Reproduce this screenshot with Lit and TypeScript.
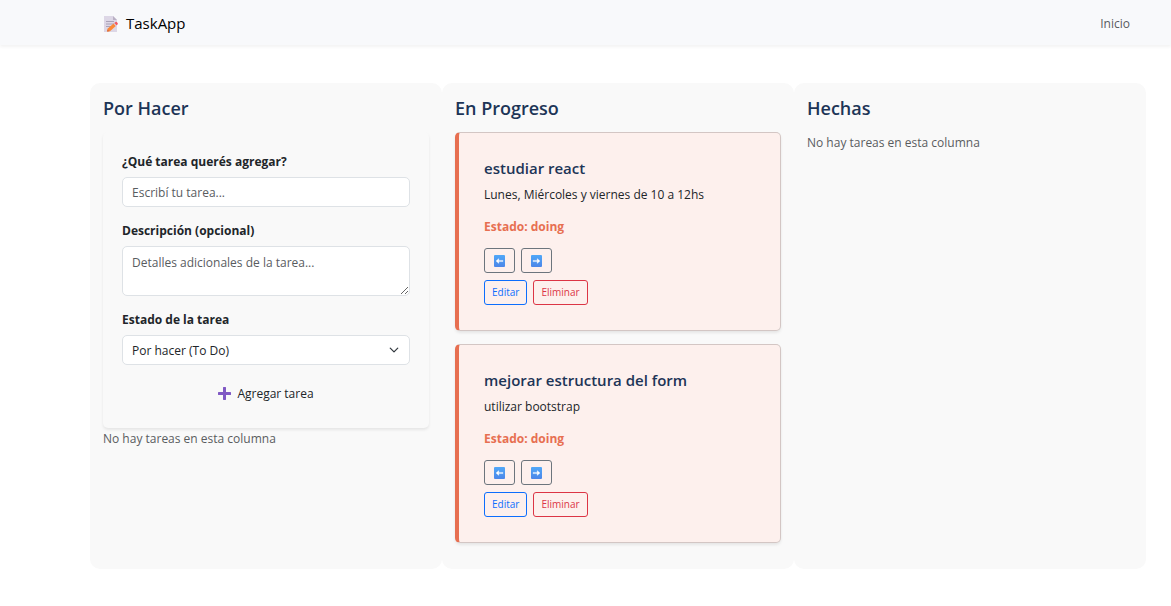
import { LitElement, html, css, svg, nothing } from "lit";
import { customElement, property, state } from "lit/decorators.js";

type Status = "todo" | "doing" | "done";

interface Task {
  id: number;
  title: string;
  description: string;
  status: Status;
}

const base = css`
  *,
  *::before,
  *::after {
    box-sizing: border-box;
  }
  h1, h2, h3, p {
    margin: 0;
  }
  button, input, textarea, select {
    font: inherit;
    margin: 0;
  }
  svg {
    display: block;
    flex: none;
  }
`;

const arrowIcon = (direction: "left" | "right") => svg`
  <svg width="11" height="12" viewBox="0 0 11 12" aria-hidden="true">
    <defs>
      <linearGradient id="tile" x1="0" y1="0" x2="0" y2="1">
        <stop offset="0" stop-color="#50a8f8" />
        <stop offset="1" stop-color="#4c86e8" />
      </linearGradient>
    </defs>
    <rect width="11" height="12" rx="1" fill="url(#tile)" />
    <path
      d=${direction === "left"
        ? "M2 6 4.8 3.6V5.4H9V6.6H4.8V8.4Z"
        : "M9 6 6.2 3.6V5.4H2V6.6H6.2V8.4Z"}
      fill="#fff" stroke="#fff" stroke-width=".3" stroke-linejoin="round"
    />
  </svg>`;

@customElement("nav-bar")
export class NavBar extends LitElement {
  static styles = [
    base,
    css`
      :host {
        display: block;
      }
      .bar {
        display: flex;
        align-items: center;
        justify-content: space-between;
        padding: 11px 41px 9px 103px;
        background: #f8f9fb;
        box-shadow: 0 2px 3px rgba(0, 0, 0, 0.05);
      }
      .brand {
        display: flex;
        align-items: center;
        gap: 7px;
        font-size: 15px;
        line-height: 25px;
        color: #000;
        text-decoration: none;
      }
      .link {
        color: #595b5e;
        text-decoration: none;
      }
    `,
  ];

  render() {
    return html`
      <nav class="bar">
        <a class="brand" href="#">
          <svg width="16" height="16" viewBox="0 0 16 16" aria-hidden="true">
            <path d="M1 0H10L14 4V16H1Z" fill="#ddd7e6" />
            <path d="M10 0V4H14Z" fill="#b9b0c4" />
            <path d="M3 5.5H11M3 8H11M3 10.5H8" stroke="#aaa2b8" stroke-width="1" />
            <path d="M4 15.4 4.8 12.6 10.6 7.6 12.8 10 7 15.2Z" fill="#fb8937" />
            <path d="M4 15.4 4.6 13.3 6.4 15.2Z" fill="#d9693c" />
            <path d="M10.6 7.6 11.6 6.8 13.8 9.1 12.8 10Z" fill="#cfc6d6" />
            <path d="M11.4 6.9 12.6 6Q13.4 5.6 14.2 6.4L14.6 6.9Q15.2 7.8 14.5 8.5L13.6 9.3Z" fill="#f4555f" />
          </svg>
          TaskApp
        </a>
        <a class="link" href="#">Inicio</a>
      </nav>
    `;
  }
}

@customElement("task-form")
export class TaskForm extends LitElement {
  static styles = [
    base,
    css`
      :host {
        display: block;
      }
      .form {
        display: flex;
        flex-direction: column;
        gap: 13px;
        padding: 19px;
        border-radius: 5px;
        background: #f9f9f9;
        box-shadow: 0 2px 3px rgba(0, 0, 0, 0.08);
      }
      .field {
        display: flex;
        flex-direction: column;
        gap: 5px;
      }
      .label {
        font-weight: 700;
        line-height: 21px;
      }
      .control {
        display: block;
        width: 100%;
        padding: 6px 9px 4px;
        border: 1px solid #dee2e6;
        border-radius: 5px;
        background: #fff;
        color: #212529;
        line-height: 18px;
        outline: none;
      }
      .control:focus {
        border-color: #86b7fe;
      }
      .control::placeholder {
        color: #595c5f;
        opacity: 1;
      }
      .area {
        min-height: 50px;
        padding-top: 7px;
        resize: vertical;
      }
      .picker {
        display: grid;
        align-items: center;
      }
      .picker > * {
        grid-area: 1 / 1;
      }
      .select {
        appearance: none;
        height: 30px;
      }
      .chevron {
        justify-self: end;
        margin-right: 11px;
        pointer-events: none;
      }
      .submit {
        display: flex;
        align-items: center;
        justify-content: center;
        gap: 6px;
        padding: 6px 10px;
        border: 0;
        border-radius: 5px;
        background: none;
        color: #212529;
        line-height: 19px;
        cursor: pointer;
      }
    `,
  ];

  private submit(event: Event) {
    event.preventDefault();
    const form = event.target as HTMLFormElement;
    const data = new FormData(form);
    const title = String(data.get("title") ?? "").trim();
    if (!title) return;
    this.dispatchEvent(
      new CustomEvent("task-add", {
        detail: {
          title,
          description: String(data.get("description") ?? ""),
          status: data.get("status"),
        },
      })
    );
    form.reset();
  }

  render() {
    return html`
      <form class="form" @submit=${this.submit}>
        <div class="field">
          <label class="label" for="title">¿Qué tarea querés agregar?</label>
          <input class="control" id="title" name="title" type="text" placeholder="Escribí tu tarea..." />
        </div>
        <div class="field">
          <label class="label" for="description">Descripción (opcional)</label>
          <textarea
            class="control area"
            id="description"
            name="description"
            rows="2"
            placeholder="Detalles adicionales de la tarea..."
          ></textarea>
        </div>
        <div class="field">
          <label class="label" for="status">Estado de la tarea</label>
          <div class="picker">
            <select class="control select" id="status" name="status">
              <option value="todo">Por hacer (To Do)</option>
              <option value="doing">En progreso (Doing)</option>
              <option value="done">Hecha (Done)</option>
            </select>
            <svg class="chevron" width="10" height="10" viewBox="0 0 16 16" aria-hidden="true">
              <path
                d="m2 5 6 6 6-6"
                fill="none"
                stroke="#343a40"
                stroke-width="2"
                stroke-linecap="round"
                stroke-linejoin="round"
              />
            </svg>
          </div>
        </div>
        <button class="submit" type="submit">
          <svg width="13" height="13" viewBox="0 0 13 13" aria-hidden="true">
            <path d="M6.5 1V12M1 6.5H12" stroke="#8059c4" stroke-width="3" stroke-linecap="round" />
          </svg>
          Agregar tarea
        </button>
      </form>
    `;
  }
}

@customElement("task-card")
export class TaskCard extends LitElement {
  @property({ attribute: false }) task!: Task;

  static styles = [
    base,
    css`
      :host {
        display: block;
      }
      .card {
        padding: 25px;
        border: 1px solid #d3c6c4;
        border-left: 4px solid #e76f51;
        border-radius: 5px;
        background: #fdf0ed;
        box-shadow: 0 2px 3px rgba(0, 0, 0, 0.08);
      }
      .title {
        margin-bottom: 6px;
        font-size: 15px;
        font-weight: 600;
        line-height: 20px;
        color: #1d3557;
      }
      .text {
        margin-bottom: 11px;
      }
      .status {
        font-weight: 700;
        color: #e76f51;
      }
      .actions {
        display: flex;
        gap: 6px;
      }
      .actions + .actions {
        margin-top: 7px;
      }
      .button {
        display: flex;
        align-items: center;
        height: 25px;
        padding: 0 7px;
        border: 1px solid currentColor;
        border-radius: 3px;
        background: none;
        font-size: 10px;
        line-height: 17px;
        cursor: pointer;
      }
      .move {
        padding: 0 9px;
        color: #6c757d;
      }
      .edit {
        color: #0d6efd;
      }
      .remove {
        color: #dc3545;
      }
    `,
  ];

  private emit(action: string) {
    this.dispatchEvent(new CustomEvent("task-action", { detail: { action, id: this.task.id } }));
  }

  render() {
    const { title, description, status } = this.task;
    return html`
      <article class="card">
        <h3 class="title">${title}</h3>
        <p class="text">${description}</p>
        <p class="text status">Estado: ${status}</p>
        <div class="actions">
          <button class="button move" aria-label="Mover a la izquierda" @click=${() => this.emit("left")}>
            ${arrowIcon("left")}
          </button>
          <button class="button move" aria-label="Mover a la derecha" @click=${() => this.emit("right")}>
            ${arrowIcon("right")}
          </button>
        </div>
        <div class="actions">
          <button class="button edit">Editar</button>
          <button class="button remove" @click=${() => this.emit("remove")}>Eliminar</button>
        </div>
      </article>
    `;
  }
}

const COLUMNS: { status: Status; heading: string }[] = [
  { status: "todo", heading: "Por Hacer" },
  { status: "doing", heading: "En Progreso" },
  { status: "done", heading: "Hechas" },
];

@customElement("app-root")
export class AppRoot extends LitElement {
  @state() private tasks: Task[] = [
    { id: 1, title: "estudiar react", description: "Lunes, Miércoles y viernes de 10 a 12hs", status: "doing" },
    { id: 2, title: "mejorar estructura del form", description: "utilizar bootstrap", status: "doing" },
  ];

  static styles = [
    base,
    css`
      :host {
        display: block;
        background: #fff;
        color: #212529;
        font-family: "Open Sans", "Noto Sans", sans-serif;
        font-size: 12px;
        line-height: 21px;
      }
      .board {
        display: grid;
        grid-template-columns: repeat(3, minmax(0, 1fr));
        padding: 38px 25px 37px 90px;
      }
      .column {
        padding: 13px;
        border-radius: 10px;
        background: #f9f9f9;
      }
      .heading {
        margin-bottom: 11px;
        font-size: 18px;
        font-weight: 600;
        line-height: 25px;
        color: #1d3557;
      }
      .card {
        margin-bottom: 13px;
      }
      .empty {
        color: #595c5f;
      }
    `,
  ];

  private add(event: CustomEvent) {
    this.tasks = [...this.tasks, { id: Date.now(), ...event.detail }];
  }

  private act(event: CustomEvent) {
    const { action, id } = event.detail;
    if (action === "remove") {
      this.tasks = this.tasks.filter((task) => task.id !== id);
      return;
    }
    const step = action === "left" ? -1 : 1;
    this.tasks = this.tasks.map((task) => {
      if (task.id !== id) return task;
      const next = COLUMNS[COLUMNS.findIndex((column) => column.status === task.status) + step];
      return next ? { ...task, status: next.status } : task;
    });
  }

  render() {
    return html`
      <nav-bar></nav-bar>
      <main class="board">
        ${COLUMNS.map(({ status, heading }) => {
          const tasks = this.tasks.filter((task) => task.status === status);
          return html`
            <section class="column">
              <h2 class="heading">${heading}</h2>
              ${status === "todo" ? html`<task-form @task-add=${this.add}></task-form>` : nothing}
              ${tasks.length
                ? tasks.map(
                    (task) => html`<task-card class="card" .task=${task} @task-action=${this.act}></task-card>`
                  )
                : html`<p class="empty">No hay tareas en esta columna</p>`}
            </section>
          `;
        })}
      </main>
    `;
  }
}
